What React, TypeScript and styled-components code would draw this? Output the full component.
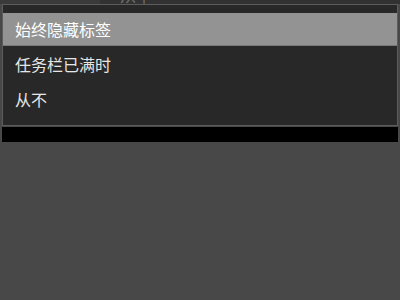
import styled, { createGlobalStyle } from "styled-components";

const GlobalStyle = createGlobalStyle`
    html, body {
        margin: 0;
        padding: 0;
        background-color: #484848;
    }
    #root {
        width: 400px;
        height: 300px;
        overflow: hidden;
    }
`;

const Page = styled.div`
    width: 400px;
    height: 300px;
    display: flex;
    flex-direction: column;
    background-color: #484848;
    font-family: "Noto Sans CJK SC", "Microsoft YaHei", sans-serif;
`;

const TopBar = styled.div`
    height: 4px;
    display: flex;
    background-color: #3a3a3a;
`;

const TopLeft = styled.div`
    width: 100px;
`;

const ComboBox = styled.div`
    flex: 1;
    background-color: #323232;
    overflow: hidden;
    padding-left: 20px;
`;

const ComboText = styled.div`
    margin-top: -13px;
    font-size: 16px;
    line-height: 16px;
    color: #6e6e6e;
`;

const Menu = styled.ul`
    margin: 0 2px 0 2px;
    padding: 8px 0 9px;
    list-style: none;
    border: 1px solid #5c5c5c;
    background-color: #282828;
    display: flex;
    flex-direction: column;
    gap: 2px;
`;

const MenuItem = styled.li<{ $selected?: boolean }>`
    height: 32px;
    display: flex;
    align-items: center;
    padding-left: 12px;
    font-size: 16px;
    color: ${(p) => (p.$selected ? "#ffffff" : "#e6e6e6")};
    background-color: ${(p) => (p.$selected ? "#939393" : "transparent")};
    border-bottom: 1px solid ${(p) => (p.$selected ? "#787878" : "transparent")};
`;

const BlackBar = styled.div`
    margin: 1px 2px 0 2px;
    height: 15px;
    background-color: #000;
`;

const items = ["始终隐藏标签", "任务栏已满时", "从不"];

export default function App() {
    return (
        <Page>
            <GlobalStyle />
            <TopBar>
                <TopLeft />
                <ComboBox>
                    <ComboText>从不</ComboText>
                </ComboBox>
            </TopBar>
            <Menu>
                {items.map((label, i) => (
                    <MenuItem key={label} $selected={i === 0}>
                        {label}
                    </MenuItem>
                ))}
            </Menu>
            <BlackBar />
        </Page>
    );
}
